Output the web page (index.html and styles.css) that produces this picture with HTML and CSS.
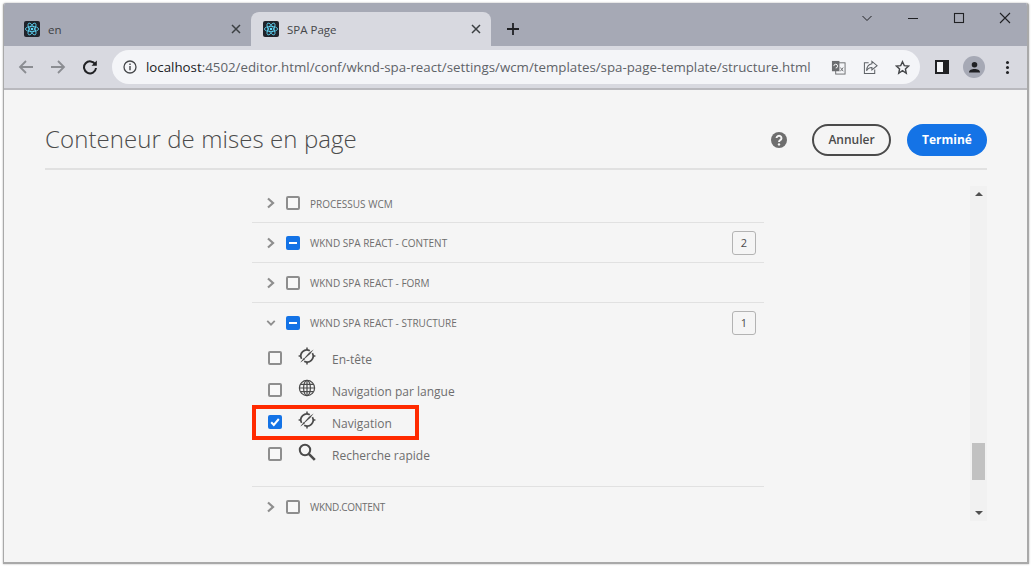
FILE: index.html
```html
<!DOCTYPE html>
<html lang="en">
<head>
    <meta charset="UTF-8">
    <meta name="viewport" content="width=device-width, initial-scale=1.0">
    <title>SPA Page</title>
    <link rel="stylesheet" href="styles.css">
</head>
<body>
    <svg class="defs" width="0" height="0">
        <defs>
            <symbol id="react" viewBox="0 0 16 16">
                <rect width="16" height="16" rx="2" fill="#20232a"/>
                <g fill="none" stroke="#61dafb" stroke-width="0.8">
                    <ellipse cx="8" cy="8" rx="6.6" ry="2.6"/>
                    <ellipse cx="8" cy="8" rx="6.6" ry="2.6" transform="rotate(60 8 8)"/>
                    <ellipse cx="8" cy="8" rx="6.6" ry="2.6" transform="rotate(120 8 8)"/>
                </g>
                <circle cx="8" cy="8" r="1.3" fill="#61dafb"/>
            </symbol>
            <symbol id="close" viewBox="0 0 10 10">
                <path d="M1 1l8 8M9 1l-8 8" fill="none" stroke="#3c4043" stroke-width="1.5"/>
            </symbol>
            <symbol id="compass" viewBox="0 0 18 18">
                <g fill="none" stroke="#4b4b4b">
                    <path d="M3.600 11.800A6 6 0 0 1 11.800 3.700" stroke-width="1.700"/>
                    <path d="M14.400 6.200A6 6 0 0 1 6.200 14.300" stroke-width="1.700"/>
                    <path d="M9 .6v2.400M9 15v2.400M.6 9H3M15 9h2.400" stroke-width="1.500"/>
                </g>
                <path d="M2.400 15.600L11 5.800L15.600 2.400L12.200 7z" fill="#4b4b4b"/>
                <path d="M5.800 11L2.400 15.600L7 12.200z" fill="#4b4b4b"/>
            </symbol>
            <symbol id="chevron-right" viewBox="0 0 10 12">
                <path d="M2 1.500L7 6L2 10.500" fill="none" stroke="#8e8e8e" stroke-width="2.200"/>
            </symbol>
            <symbol id="chevron-down" viewBox="0 0 12 10">
                <path d="M1.500 2.500L6 7L10.500 2.500" fill="none" stroke="#8e8e8e" stroke-width="2.200"/>
            </symbol>
        </defs>
    </svg>

    <div class="window">
        <div class="tabstrip">
            <div class="tab">
                <svg class="favicon"><use href="#react"/></svg>
                <span class="tab-title">en</span>
                <svg class="tab-close"><use href="#close"/></svg>
            </div>
            <div class="tab tab-active">
                <svg class="favicon"><use href="#react"/></svg>
                <span class="tab-title">SPA Page</span>
                <svg class="tab-close"><use href="#close"/></svg>
            </div>
            <svg class="new-tab" viewBox="0 0 12 12"><path d="M6 0v12M0 6h12" fill="none" stroke="#202124" stroke-width="1.800"/></svg>
            <div class="window-controls">
                <svg viewBox="0 0 12 12"><path d="M1.500 4l4.500 4.500L10.500 4" fill="none" stroke="#202124"/></svg>
                <svg viewBox="0 0 12 12"><path d="M1 6.500h10" fill="none" stroke="#202124" stroke-width="1.200"/></svg>
                <svg viewBox="0 0 12 12"><rect x="1.500" y="1.500" width="9" height="9" fill="none" stroke="#202124" stroke-width="1.100"/></svg>
                <svg viewBox="0 0 12 12"><path d="M1 1l10 10M11 1L1 11" fill="none" stroke="#202124" stroke-width="1.100"/></svg>
            </div>
        </div>

        <div class="toolbar">
            <svg class="nav-icon" viewBox="0 0 16 16"><path d="M15 8H2M8 2L2 8l6 6" fill="none" stroke="#8b8d92" stroke-width="1.800"/></svg>
            <svg class="nav-icon" viewBox="0 0 16 16"><path d="M1 8h13M8 2l6 6-6 6" fill="none" stroke="#8b8d92" stroke-width="1.800"/></svg>
            <svg class="nav-icon nav-reload" viewBox="0 0 16 16"><path d="M13.300 5.500A6 6 0 1 0 14 9" fill="none" stroke="#202124" stroke-width="2"/><path d="M14.800 1.500v5.300H9.500z" fill="#202124"/></svg>
            <div class="omnibox">
                <svg class="info-icon" viewBox="0 0 14 14"><circle cx="7" cy="7" r="6" fill="none" stroke="#45474a" stroke-width="1.300"/><path d="M7 6v4.200M7 3.500v1.400" stroke="#45474a" stroke-width="1.400"/></svg>
                <span class="url"><span class="url-host">localhost</span>:4502/editor.html/conf/wknd-spa-react/settings/wcm/templates/spa-page-template/structure.html</span>
                <svg class="omni-icon" viewBox="0 0 16 16"><rect x="5" y="3" width="10" height="12" fill="#f4f5f8" stroke="#6b6d70"/><rect x="1" y="1" width="8" height="11" fill="#6b6d70"/><path d="M3 6.500a2 2 0 1 1 2 2" fill="none" stroke="#fff"/><path d="M10 8l3 4M13 8l-3 4" stroke="#6b6d70"/></svg>
                <svg class="omni-icon" viewBox="0 0 16 16"><path d="M6 3H1.500v11.500h11V10" fill="none" stroke="#5f6368" stroke-width="1.100"/><path d="M9.500 1.500L15 6l-5.500 4.500V8C7 8 5 9 3.800 11.500 4 7.500 6 4.500 9.500 4z" fill="none" stroke="#5f6368" stroke-width="1.100"/></svg>
                <svg class="omni-icon" viewBox="0 0 16 16"><path d="M8 1.800l1.900 4.200 4.600.5-3.400 3.100.9 4.500L8 11.300l-4 2.800.9-4.500L1.500 6.500l4.600-.5z" fill="none" stroke="#45474a" stroke-width="1.500"/></svg>
            </div>
            <svg class="side-icon" viewBox="0 0 14 14"><path d="M0 0h14v14H0z" fill="#202124"/><path d="M2 2h6v10H2z" fill="#f4f5f8"/></svg>
            <span class="avatar">
                <svg viewBox="0 0 14 14"><circle cx="7" cy="4" r="3" fill="#202124"/><path d="M1 12.500c0-3 3-4 6-4s6 1 6 4z" fill="#202124"/></svg>
            </span>
            <span class="menu-dots"><i></i><i></i><i></i></span>
        </div>

        <div class="page">
            <header class="page-head">
                <h1>Conteneur de mises en page</h1>
                <svg class="help" viewBox="0 0 16 16"><circle cx="8" cy="8" r="8" fill="#6e6e6e"/><path d="M5.500 6a2.500 2.300 0 1 1 3.700 2.100C8.400 8.600 8 9 8 10" fill="none" stroke="#f5f5f5" stroke-width="1.900"/><circle cx="8" cy="12.400" r="1.200" fill="#f5f5f5"/></svg>
                <button class="btn btn-cancel" type="button">Annuler</button>
                <button class="btn btn-done" type="button">Terminé</button>
            </header>

            <div class="scroller">
                <div class="list">
                    <div class="group first">
                        <svg class="chevron"><use href="#chevron-right"/></svg>
                        <span class="check"></span>
                        <span class="group-name">PROCESSUS WCM</span>
                    </div>
                    <div class="group">
                        <svg class="chevron"><use href="#chevron-right"/></svg>
                        <span class="check check-on"></span>
                        <span class="group-name">WKND SPA REACT - CONTENT</span>
                        <span class="count">2</span>
                    </div>
                    <div class="group">
                        <svg class="chevron"><use href="#chevron-right"/></svg>
                        <span class="check"></span>
                        <span class="group-name">WKND SPA REACT - FORM</span>
                    </div>
                    <div class="group group-open">
                        <svg class="chevron"><use href="#chevron-down"/></svg>
                        <span class="check check-on"></span>
                        <span class="group-name">WKND SPA REACT - STRUCTURE</span>
                        <span class="count">1</span>
                    </div>
                    <div class="children">
                        <div class="item">
                            <span class="check"></span>
                            <svg class="item-icon"><use href="#compass"/></svg>
                            <span class="item-name">En-tête</span>
                        </div>
                        <div class="item">
                            <span class="check"></span>
                            <svg class="item-icon" viewBox="0 0 18 18"><g fill="none" stroke="#4b4b4b" stroke-width="1.200"><circle cx="9" cy="9" r="7.600"/><ellipse cx="9" cy="9" rx="3.400" ry="7.600"/><path d="M9 1.400v15.200M1.400 9h15.200M2.400 5.400h13.200M2.400 12.600h13.200"/></g></svg>
                            <span class="item-name">Navigation par langue</span>
                        </div>
                        <div class="item item-marked">
                            <span class="check check-ticked">
                                <svg viewBox="0 0 12 12"><path d="M2.200 6.200l2.600 2.800 5-6" fill="none" stroke="#fff" stroke-width="2"/></svg>
                            </span>
                            <svg class="item-icon"><use href="#compass"/></svg>
                            <span class="item-name">Navigation</span>
                            <span class="marker"></span>
                        </div>
                        <div class="item">
                            <span class="check"></span>
                            <svg class="item-icon" viewBox="0 0 18 18"><circle cx="7" cy="7" r="5.200" fill="none" stroke="#4b4b4b" stroke-width="2"/><path d="M10.800 10.800l6 6" stroke="#4b4b4b" stroke-width="2.600"/></svg>
                            <span class="item-name">Recherche rapide</span>
                        </div>
                    </div>
                    <div class="group">
                        <svg class="chevron"><use href="#chevron-right"/></svg>
                        <span class="check"></span>
                        <span class="group-name group-name-tight">WKND.CONTENT</span>
                    </div>
                </div>
                <div class="scrollbar">
                    <span class="arrow arrow-up"></span>
                    <span class="thumb"></span>
                    <span class="arrow arrow-down"></span>
                </div>
            </div>
        </div>
    </div>
</body>
</html>
```

FILE: styles.css
```css
* {
    box-sizing: border-box;
}
html, body {
    height: 100%;
}
body {
    margin: 0;
    padding: 3px 3px 4px 3px;
    background-color: #fff;
    font-family: "Open Sans", Arial, sans-serif;
    overflow: hidden;
}
.defs {
    position: absolute;
}
.window {
    height: 100%;
    display: flex;
    flex-direction: column;
    border-right: 2px solid #a9a9a9;
    border-bottom: 2px solid #a9a9a9;
    border-left: 1px solid #a9a9a9;
    background-color: #f5f5f5;
    box-shadow: 0 0 2px rgba(0, 0, 0, 0.35);
    border-radius: 3px 3px 0 0;
    overflow: hidden;
}

/* browser chrome */
.tabstrip {
    height: 43px;
    flex: none;
    display: flex;
    align-items: flex-end;
    padding-left: 8px;
    background-color: #a6a9b5;
}
.tab {
    width: 239px;
    height: 34px;
    display: flex;
    align-items: center;
    padding: 0 8px 0 12px;
    font-size: 11.5px;
    color: #3c4043;
}
.tab-active {
    width: 240px;
    border-radius: 8px 8px 0 0;
    background-color: #d8d9e0;
    color: #45474a;
}
.favicon {
    width: 16px;
    height: 16px;
    flex: none;
}
.tab-title {
    flex: 1;
    margin-left: 8px;
}
.tab-close {
    width: 10px;
    height: 10px;
    margin-right: 2px;
}
.new-tab {
    width: 12px;
    height: 12px;
    margin: 0 0 11px 16px;
}
.window-controls {
    align-self: flex-start;
    margin-left: auto;
    margin-top: 9px;
    display: flex;
    gap: 34px;
    padding-right: 16px;
}
.window-controls svg {
    width: 12px;
    height: 12px;
}
.toolbar {
    height: 44px;
    flex: none;
    display: flex;
    align-items: center;
    padding: 0 8px 0 14px;
    border-bottom: 2px solid #b9b9be;
    background-color: #d8d9e0;
}
.nav-icon {
    width: 16px;
    height: 16px;
    margin-right: 16px;
}
.nav-reload {
    margin-right: 14px;
}
.omnibox {
    width: 808px;
    height: 34px;
    display: flex;
    align-items: center;
    padding: 0 10px 0 11px;
    border-radius: 17px;
    background-color: #f4f5f8;
}
.info-icon {
    width: 14px;
    height: 14px;
    flex: none;
}
.url {
    flex: 1;
    margin-left: 9px;
    font-size: 13.3px;
    white-space: nowrap;
    color: #5f6368;
}
.url-host {
    color: #202124;
}
.omni-icon {
    width: 15px;
    height: 15px;
    flex: none;
    margin-left: 17px;
}
.side-icon {
    width: 14px;
    height: 14px;
    margin-left: 15px;
}
.avatar {
    width: 22px;
    height: 22px;
    margin-left: 14px;
    display: flex;
    align-items: center;
    justify-content: center;
    border-radius: 50%;
    background-color: #a6a9b5;
}
.avatar svg {
    width: 13px;
    height: 13px;
}
.menu-dots {
    margin-left: 21px;
    display: flex;
    flex-direction: column;
    gap: 2px;
}
.menu-dots i {
    width: 3px;
    height: 3px;
    border-radius: 50%;
    background-color: #202124;
}

/* page */
.page {
    flex: 1;
    min-height: 0;
    display: flex;
    flex-direction: column;
    padding: 0 40px 41px 41px;
}
.page-head {
    height: 80px;
    flex: none;
    display: flex;
    align-items: center;
    padding-top: 21px;
    border-bottom: 2px solid #e1e1e1;
}
h1 {
    flex: 1;
    margin: 0 0 2px 0;
    font-size: 24px;
    font-weight: 300;
    letter-spacing: 0.08px;
    color: #4b4b4b;
}
.help {
    width: 16px;
    height: 16px;
    margin-right: 25px;
}
.btn {
    height: 32px;
    border-radius: 16px;
    font-family: "Open Sans", Arial, sans-serif;
    font-size: 12px;
    font-weight: 600;
    padding: 0;
    cursor: pointer;
}
.btn-cancel {
    width: 79px;
    border: 2px solid #4b4b4b;
    background: transparent;
    color: #4b4b4b;
}
.btn-done {
    width: 80px;
    margin-left: 16px;
    border: 0;
    background-color: #1473e6;
    color: #fff;
    font-weight: 700;
}
.scroller {
    flex: 1;
    min-height: 0;
    margin-top: 16px;
    padding-left: 207px;
    display: flex;
    justify-content: space-between;
    overflow: hidden;
}
.list {
    width: 512px;
    margin-top: -3px;
}
.group {
    height: 40px;
    display: flex;
    align-items: center;
    padding: 0 8px 0 14px;
    border-top: 1px solid #e1e1e1;
    color: #6e6e6e;
}
.first {
    height: 39px;
    border-top: 0;
    padding-top: 1px;
}
.chevron {
    width: 10px;
    height: 12px;
    flex: none;
}
.check {
    width: 14px;
    height: 14px;
    flex: none;
    margin-left: 10px;
    display: flex;
    align-items: center;
    justify-content: center;
    border: 2px solid #8e8e8e;
    border-radius: 2px;
    background-color: #f8f8f8;
}
.check-on {
    border: 0;
    background-color: #1473e6;
}
.check-on::before {
    content: "";
    width: 8px;
    height: 2px;
    background-color: #fff;
}
.check-ticked {
    border: 0;
    background-color: #1473e6;
}
.check-ticked svg {
    width: 12px;
    height: 12px;
}
.group-name {
    flex: 1;
    margin: 1px 0 0 10px;
    font-size: 10px;
}
.group-name-tight {
    letter-spacing: -0.3px;
}
.count {
    width: 24px;
    height: 24px;
    display: flex;
    align-items: center;
    justify-content: center;
    border: 1px solid #b3b3b3;
    border-radius: 3px;
    font-size: 11px;
    color: #4b4b4b;
}
.children {
    padding-bottom: 16px;
}
.item {
    position: relative;
    height: 32px;
    display: flex;
    align-items: center;
    padding-left: 6px;
}
.item .check {
    margin-left: 10px;
}
.item-icon {
    width: 18px;
    height: 18px;
    flex: none;
    margin: -4px 0 0 16px;
}
.item-name {
    margin: 2px 0 0 16px;
    font-size: 12px;
    color: #6e6e6e;
}
/* red annotation drawn over the row */
.marker {
    position: absolute;
    left: 0;
    top: -1px;
    width: 167px;
    height: 35px;
    border: 4px solid #ff2a00;
}
.scrollbar {
    width: 17px;
    flex: none;
    position: relative;
    background-color: #f1f1f1;
}
.thumb {
    position: absolute;
    left: 2px;
    top: 257px;
    width: 13px;
    height: 37px;
    background-color: #c1c1c1;
}
.arrow {
    position: absolute;
    left: 5px;
    width: 0;
    height: 0;
    border-left: 4px solid transparent;
    border-right: 4px solid transparent;
}
.arrow-up {
    top: 6px;
    border-bottom: 4px solid #505050;
}
.arrow-down {
    bottom: 6px;
    border-top: 4px solid #505050;
}
```
